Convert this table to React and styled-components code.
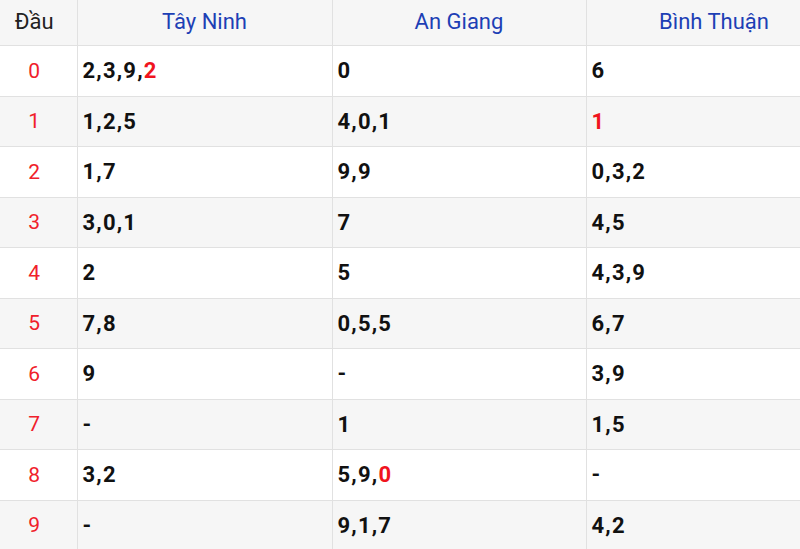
import React from 'react';
import styled, { createGlobalStyle } from 'styled-components';

const GlobalStyle = createGlobalStyle`
  html, body {
    margin: 0;
    padding: 0;
    background: #fff;
    overflow: hidden;
  }
  body {
    font-family: Roboto, "Liberation Sans", sans-serif;
  }
`;

const rows = [
  ['0', ['2,3,9,', '2'], ['0'], ['6']],
  ['1', ['1,2,5'], ['4,0,1'], ['', '1']],
  ['2', ['1,7'], ['9,9'], ['0,3,2']],
  ['3', ['3,0,1'], ['7'], ['4,5']],
  ['4', ['2'], ['5'], ['4,3,9']],
  ['5', ['7,8'], ['0,5,5'], ['6,7']],
  ['6', ['9'], ['-'], ['3,9']],
  ['7', ['-'], ['1'], ['1,5']],
  ['8', ['3,2'], ['5,9,', '0'], ['-']],
  ['9', ['-'], ['9,1,7'], ['4,2']],
];

const Wrap = styled.div`
  width: 800px;
  height: 549px;
  overflow: hidden;
`;

const Table = styled.table`
  width: 842px;
  border-collapse: collapse;
  table-layout: fixed;
`;

const Row = styled.tr`
  background: ${(p) => (p.$gray ? '#f6f6f6' : '#fff')};
`;

const Head = styled.th`
  height: 43px;
  padding: 0 ${(p) => (p.$dark ? '8px' : '0')} 2px 0;
  border: 1px solid #e1e1e1;
  border-top: none;
  font-weight: 400;
  font-size: 22px;
  color: ${(p) => (p.$dark ? '#222' : '#1d3fb5')};
  text-align: center;
  vertical-align: middle;
  &:first-child { border-left: none; }
`;

const Dau = styled.td`
  height: 49.5px;
  padding: 0 8px 0 0;
  border: 1px solid #e1e1e1;
  border-left: none;
  text-align: center;
  font-size: 21px;
  color: #f0202a;
`;

const Cell = styled.td`
  height: 49.5px;
  padding: 0 5px;
  border: 1px solid #e1e1e1;
  font-size: 22px;
  font-weight: 700;
  color: #111;
  letter-spacing: 1.2px;
`;

const Hot = styled.span`
  color: #f0141e;
`;

const Nums = ({ v }) => (
  <>
    {v[0]}
    {v[1] && <Hot>{v[1]}</Hot>}
  </>
);

export default function App() {
  return (
    <Wrap>
      <GlobalStyle />
      <Table>
        <colgroup>
          <col style={{ width: 77 }} />
          <col style={{ width: 255 }} />
          <col style={{ width: 254 }} />
          <col style={{ width: 256 }} />
        </colgroup>
        <thead>
          <Row $gray>
            <Head $dark>Đầu</Head>
            <Head>Tây Ninh</Head>
            <Head>An Giang</Head>
            <Head>Bình Thuận</Head>
          </Row>
        </thead>
        <tbody>
          {rows.map((r, i) => (
            <Row key={r[0]} $gray={i % 2 === 1}>
              <Dau>{r[0]}</Dau>
              <Cell><Nums v={r[1]} /></Cell>
              <Cell><Nums v={r[2]} /></Cell>
              <Cell><Nums v={r[3]} /></Cell>
            </Row>
          ))}
        </tbody>
      </Table>
    </Wrap>
  );
}
